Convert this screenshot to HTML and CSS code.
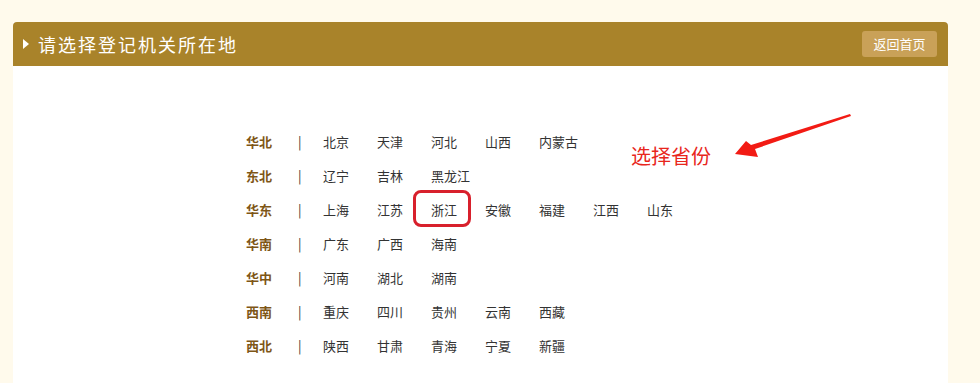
FILE: index.html
```html
<!DOCTYPE html>
<html>
<head>
  <meta charset="utf-8">
  <title>请选择登记机关所在地</title>
  <link rel="stylesheet" href="styles.css">
</head>
<body>
  <div class="panel">
    <div class="panel-head">
      <h2><span class="arrow"></span>请选择登记机关所在地</h2>
      <a href="#" class="btn-home">返回首页</a>
    </div>
    <div class="panel-body">
      <ul class="areas">
        <li><b>华北</b><i>|</i><a href="#">北京</a><a href="#">天津</a><a href="#">河北</a><a href="#">山西</a><a href="#">内蒙古</a></li>
        <li><b>东北</b><i>|</i><a href="#">辽宁</a><a href="#">吉林</a><a href="#">黑龙江</a></li>
        <li><b>华东</b><i>|</i><a href="#">上海</a><a href="#">江苏</a><a href="#" class="picked">浙江</a><a href="#">安徽</a><a href="#">福建</a><a href="#">江西</a><a href="#">山东</a></li>
        <li><b>华南</b><i>|</i><a href="#">广东</a><a href="#">广西</a><a href="#">海南</a></li>
        <li><b>华中</b><i>|</i><a href="#">河南</a><a href="#">湖北</a><a href="#">湖南</a></li>
        <li><b>西南</b><i>|</i><a href="#">重庆</a><a href="#">四川</a><a href="#">贵州</a><a href="#">云南</a><a href="#">西藏</a></li>
        <li><b>西北</b><i>|</i><a href="#">陕西</a><a href="#">甘肃</a><a href="#">青海</a><a href="#">宁夏</a><a href="#">新疆</a></li>
      </ul>

      <!-- annotation -->
      <span class="note">选择省份</span>
      <svg class="note-arrow" width="130" height="50" viewBox="0 0 130 50">
        <path d="M116 0 L117 2 L21 35 L24 43 L1 40 L12 27 L17 31 Z" fill="#f21b14"/>
      </svg>
    </div>
  </div>
</body>
</html>
```

FILE: styles.css
```css
body {
  margin: 0;
  padding: 22px 32px 0 13px;
  background-color: #fffaec;
  font-family: "Noto Sans CJK SC", "Liberation Sans", sans-serif;
}

.panel {
  background-color: #fff;
  width: 935px;
  height: 400px;
}

.panel-head {
  display: flex;
  align-items: center;
  justify-content: space-between;
  height: 44px;
  padding: 0 11px 0 10px;
  background-color: #a9832a;
  border-radius: 4px 4px 0 0;
}

.panel-head h2 {
  display: flex;
  align-items: center;
  margin: 0;
  color: #fff;
  font-size: 18px;
  font-weight: normal;
  letter-spacing: 2px;
}

.arrow {
  width: 0;
  height: 0;
  border-top: 5px solid transparent;
  border-bottom: 5px solid transparent;
  border-left: 6px solid #fff;
  margin-right: 9px;
}

.btn-home {
  display: block;
  width: 75px;
  height: 26px;
  line-height: 26px;
  text-align: center;
  background-color: #c9a158;
  border-radius: 3px;
  color: #fff;
  font-size: 13px;
  text-decoration: none;
}

.panel-body {
  position: relative;
  padding-top: 58px;
}

.areas {
  list-style: none;
  margin: 0;
  padding: 0 0 0 233px;
}

.areas li {
  display: flex;
  align-items: center;
  height: 34px;
  font-size: 13px;
}

.areas b {
  width: 52px;
  color: #7e5616;
}

.areas i {
  font-style: normal;
  width: 25px;
  color: #333;
}

.areas a {
  width: 54px;
  color: #333;
  text-decoration: none;
}

.areas a.picked {
  position: relative;
}

.areas a.picked::after {
  content: "";
  position: absolute;
  left: -18px;
  top: -10px;
  width: 52px;
  height: 31px;
  border: 3px solid #d8202c;
  border-radius: 8px;
}

.note {
  position: absolute;
  left: 618px;
  top: 75px;
  color: #e8261c;
  font-size: 20px;
}

.note-arrow {
  position: absolute;
  left: 721px;
  top: 48px;
}
```
